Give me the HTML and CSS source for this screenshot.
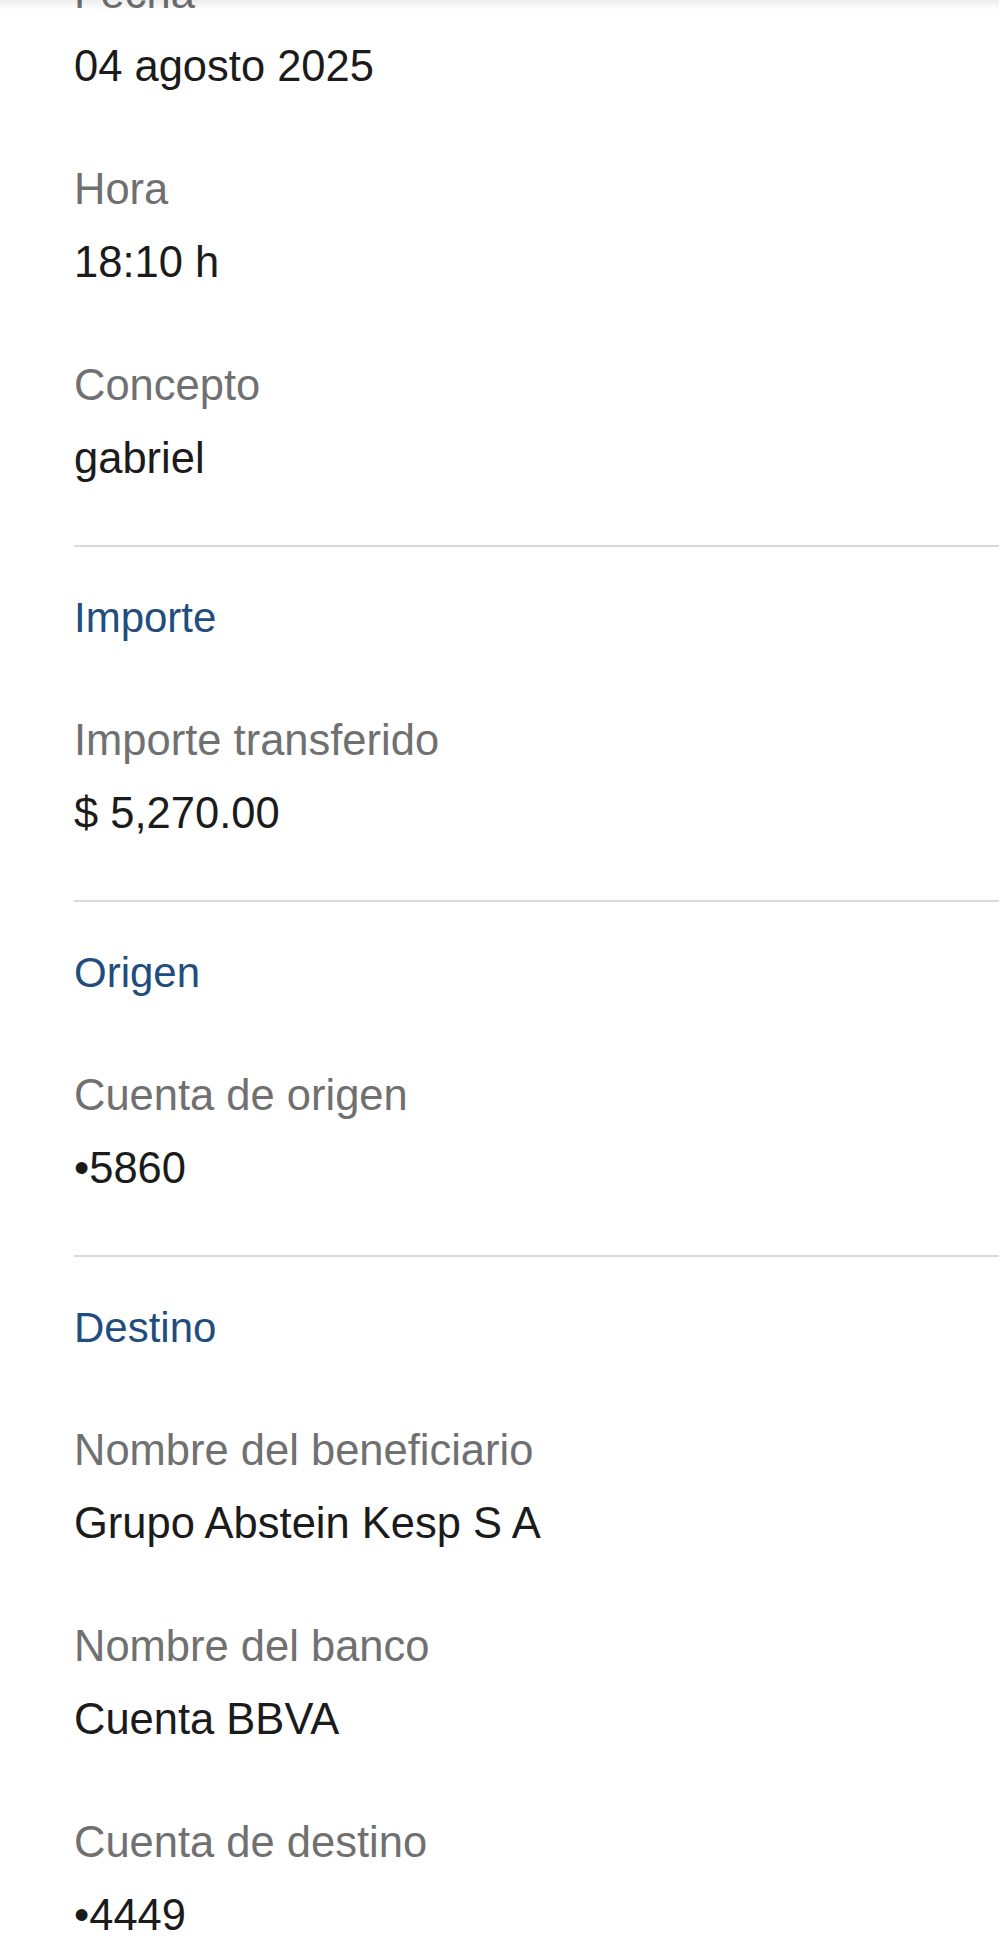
FILE: index.html
```html
<!DOCTYPE html>
<html lang="es">
<head>
    <meta charset="UTF-8">
    <meta name="viewport" content="width=device-width, initial-scale=1.0">
    <title>Detalle de la transferencia</title>
    <link rel="stylesheet" href="styles.css">
</head>
<body>

<div class="top-shadow"></div>

<div class="details">
    <div class="section">
        <div class="field">
            <div class="label">Fecha</div>
            <div class="value">04 agosto 2025</div>
        </div>
        <div class="field">
            <div class="label">Hora</div>
            <div class="value">18:10 h</div>
        </div>
        <div class="field">
            <div class="label">Concepto</div>
            <div class="value">gabriel</div>
        </div>
    </div>

    <div class="section">
        <div class="section-title">Importe</div>
        <div class="field">
            <div class="label">Importe transferido</div>
            <div class="value">$ 5,270.00</div>
        </div>
    </div>

    <div class="section">
        <div class="section-title">Origen</div>
        <div class="field">
            <div class="label">Cuenta de origen</div>
            <div class="value">&bull;5860</div>
        </div>
    </div>

    <div class="section last">
        <div class="section-title">Destino</div>
        <div class="field">
            <div class="label">Nombre del beneficiario</div>
            <div class="value">Grupo Abstein Kesp S A</div>
        </div>
        <div class="field">
            <div class="label">Nombre del banco</div>
            <div class="value">Cuenta BBVA</div>
        </div>
        <div class="field">
            <div class="label">Cuenta de destino</div>
            <div class="value">&bull;4449</div>
        </div>
    </div>
</div>

</body>
</html>
```

FILE: styles.css
```css
body {
    margin: 0;
    padding: 0;
    background-color: #fff;
    font-family: "Liberation Sans", Arial, sans-serif;
    overflow: hidden;
}

/* faint shadow under the (scrolled away) header */
.top-shadow {
    position: fixed;
    top: 0;
    left: 0;
    right: 0;
    height: 10px;
    background: linear-gradient(rgba(0, 0, 0, 0.07), rgba(0, 0, 0, 0));
    z-index: 2;
}

.details {
    margin-top: -43px; /* page is scrolled, first label is cut */
    padding-left: 74px;
}

.section {
    display: flex;
    flex-direction: column;
    gap: 50px;
    padding: 34px 0 50px;
    border-bottom: 2px solid #dadada;
}

.section:first-child {
    padding-top: 0;
}

.section.last {
    border-bottom: none;
}

.section-title {
    font-size: 42px;
    line-height: 73px;
    color: #1f4d7d;
}

.label {
    font-size: 43.5px;
    line-height: 73px;
    color: #707070;
}

.value {
    font-size: 43.5px;
    line-height: 73px;
    color: #1b1b1b;
}
```
